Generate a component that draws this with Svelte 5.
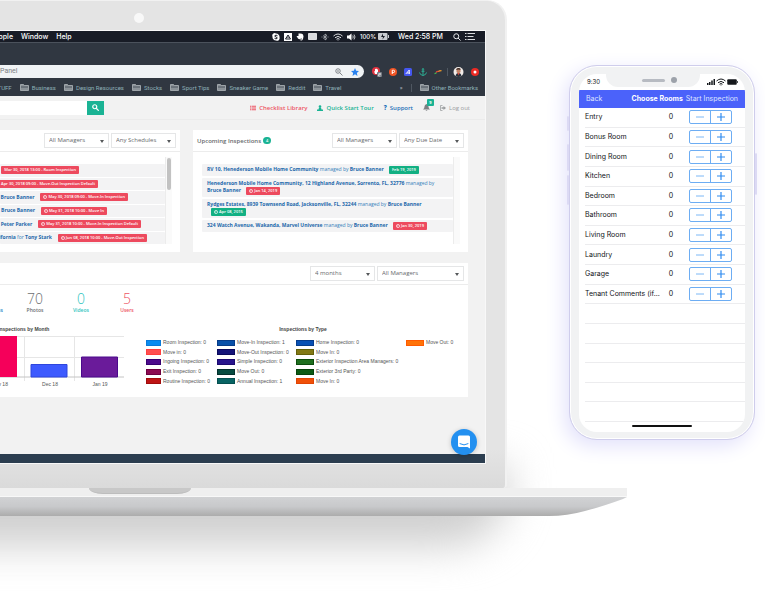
<script>
  const bookmarks = ['Business', 'Design Resources', 'Stocks', 'Sport Tips', 'Sneaker Game', 'Reddit', 'Travel'];

  // "end" is the right edge of each entry inside the scrolled list
  const completed = [
    { end: 79, place: '', name: '', tag: 'Mar 30, 2018 13:00 - Room Inspection', clock: false },
    { end: 98, place: '', name: '', tag: 'Apr 30, 2018 09:00 - Move-Out Inspection Default', clock: true },
    { end: 128, place: '', name: 'Bruce Banner', tag: 'May 30, 2018 09:00 - Move-In Inspection', clock: true },
    { end: 107, place: '', name: 'Bruce Banner', tag: 'May 31, 2018 10:00 - Move In', clock: true },
    { end: 141, place: '', name: 'Peter Parker', tag: 'May 31, 2018 10:00 - Move-In Inspection Default', clock: true },
    { end: 147, place: 'California', name: 'Tony Stark', tag: 'Jun 08, 2018 10:00 - Move-Out Inspection', clock: true }
  ];

  const upcoming = [
    { place: 'RV 10, Henederson Mobile Home Community', tag: 'Feb 19, 2019', tone: 'green', clock: false },
    { place: 'Henederson Mobile Home Community, 12 Highland Avenue, Sorrento, FL, 32776', tag: 'Jan 14, 2019', tone: 'red', clock: true },
    { place: 'Rydges Estates, 8939 Townsend Road, Jacksonville, FL, 32244', tag: 'Apr 08, 2015', tone: 'green', clock: true },
    { place: '324 Watch Avenue, Wakanda, Marvel Universe', tag: 'Jan 30, 2019', tone: 'red', clock: true }
  ];

  const stats = [
    { n: 12, label: 'Inspections', color: '#1c84c6' },
    { n: 70, label: 'Photos', color: '#6b6e70' },
    { n: 0, label: 'Videos', color: '#2fc4c0' },
    { n: 5, label: 'Users', color: '#ed5565' }
  ];

  const legend = [
    [
      ['Room Inspection: 0', '#0a8cf0', '#0a7ad8'],
      ['Move in: 0', '#ff4f4f', '#ff3f3f'],
      ['Ingoing Inspection: 0', '#4b0a8c', '#360070'],
      ['Exit Inspection: 0', '#8c0a50', '#6e0040'],
      ['Routine Inspection: 0', '#be1414', '#a00c0c']
    ],
    [
      ['Move-In Inspection: 1', '#0850a8', '#063c88'],
      ['Move-Out Inspection: 0', '#141478', '#0a0a5c'],
      ['Simple Inspection: 0', '#28148c', '#1c0a70'],
      ['Move Out: 0', '#064b40', '#04302c'],
      ['Annual Inspection: 1', '#086464', '#045050']
    ],
    [
      ['Home Inspection: 0', '#0850b4', '#063c8c'],
      ['Move In: 0', '#827814', '#64600a'],
      ['Exterior Inspection Area Managers: 0', '#1e6e1e', '#0c4c0c'],
      ['Exterior 3rd Party: 0', '#0c5a14', '#06440c'],
      ['Move In: 0', '#f05008', '#e04404']
    ],
    [['Move Out: 0', '#ff7308', '#ff5a00']]
  ];

  let rooms = $state([
    'Entry', 'Bonus Room', 'Dining Room', 'Kitchen', 'Bedroom', 'Bathroom',
    'Living Room', 'Laundry', 'Garage', 'Tenant Comments (if...'
  ].map((name) => ({ name, count: 0 })));
  const blanks = [1, 2, 3, 4, 5, 6];
</script>

{#snippet folder()}
  <svg class="folder" viewBox="0 0 18 14" aria-hidden="true">
    <path d="M1 13V1h6l1.500 2H17v10z" fill="#8b9298" stroke="#b4babd" stroke-width="1.500" />
    <path d="M2 6h14" stroke="#3a424c" stroke-width="1.500" />
  </svg>
{/snippet}

{#snippet clockIcon()}
  <svg class="clock" viewBox="0 0 10 10" aria-hidden="true">
    <circle cx="5" cy="5" r="4" fill="none" stroke="#fff" stroke-width="1.600" />
    <path d="M5 2.500V5.500H3" fill="none" stroke="#fff" stroke-width="1.200" />
  </svg>
{/snippet}

{#snippet wifi(color)}
  <svg width="10" height="8" viewBox="0 0 20 16" fill="none" stroke={color} stroke-width="2" aria-hidden="true">
    <path d="M1 6Q10-2 19 6M4 9.500Q10 4 16 9.500M7 12.500Q10 9.500 13 12.500" />
    <circle cx="10" cy="14" r="1" fill={color} stroke="none" />
  </svg>
{/snippet}

{#snippet picker(name, label, wide)}
  <span class="picker" class:wide>
    <select aria-label={name}><option>{label}</option></select>
  </span>
{/snippet}

<main class="scene">
  <section class="laptop">
    <div class="floor-shadow"></div>
    <div class="lid">
      <span class="camera"></span>
      <div class="screen">
        <div class="menubar">
          <nav class="menus"><span>People</span><span>Window</span><span>Help</span></nav>
          <div class="tray">
            <svg width="8" height="8" viewBox="0 0 16 16"><path d="M5 0a5 5 0 0 1 3 1a7 7 0 0 1 7 8a5 5 0 0 1-7 6a7 7 0 0 1-7-8A5 5 0 0 1 5 0z" fill="#fff" /><path d="M11 5.500Q8 3.500 6 5t2 3t2 3t-5-.5" fill="none" stroke="#181c26" stroke-width="2" /></svg>
            <svg width="8" height="8" viewBox="0 0 16 16"><path d="M0 0h16v16H0z" fill="#fff" /><path d="M8 4l5 8H3zM8 7v3" fill="none" stroke="#181c26" stroke-width="2" /></svg>
            <svg width="8" height="8" viewBox="0 0 16 16"><path d="M5 1q7-1 9 2t0 9q-2 4-5 3v-3q-3 1-5-1L1 6h4z" fill="#fff" /><path d="M9 12h3" stroke="#181c26" stroke-width="1.500" /></svg>
            <svg width="9" height="7" viewBox="0 0 18 14"><path d="M1 1h16v12H1z" fill="#d9dbde" stroke="#fff" stroke-width="1.500" /></svg>
            <svg width="8" height="8" viewBox="0 0 16 16" fill="none" stroke="#b9bcc2" stroke-width="1.500"><path d="M4 5l8 6-4 3V2l4 3-8 6M1 8h2M13 8h2" /></svg>
            {@render wifi('#d9dbde')}
            <svg width="9" height="8" viewBox="0 0 18 16"><path d="M0 5h4l5-4v14l-5-4H0z" fill="#fff" /><path d="M11.500 5q2 3 0 6M14 3q4 5 0 10" fill="none" stroke="#fff" stroke-width="1.500" /></svg>
            <span class="charge">100%
              <svg width="11" height="7" viewBox="0 0 22 14"><rect width="19" height="14" rx="2" fill="#c8cbd0" /><path d="M20 4h2v6h-2z" fill="#c8cbd0" /><path d="M10 1L6 8h4l-1 5 5-7h-4z" fill="#181c26" /></svg>
            </span>
            <span class="time">Wed 2:58 PM</span>
            <svg width="8" height="8" viewBox="0 0 16 16" fill="none" stroke="#e4e6e9" stroke-width="2"><circle cx="6.500" cy="6.500" r="5" /><path d="M10 10l5 5" /></svg>
            <svg width="10" height="7" viewBox="0 0 20 14" stroke="#d9dbde" stroke-width="2"><path d="M0 1h3M5 1h15M0 7h3M5 7h12M0 13h3M5 13h15" /></svg>
          </div>
        </div>
        <div class="tabs"></div>
        <div class="address">
          <div class="omnibox">
            <input aria-label="Address" value="Panel" />
            <svg width="8" height="8" viewBox="0 0 16 16" fill="none" stroke="#666b70" stroke-width="1.600"><circle cx="6" cy="6" r="4.500" /><path d="M9.500 9.500L15 15M4 6h4" /></svg>
            <svg width="8" height="8" viewBox="0 0 16 16"><path d="M8 0l2.300 5.500 5.700.5-4.300 3.800L13 16l-5-3.300L3 16l1.300-6.200L0 6l5.700-.5z" fill="#2a83f0" /></svg>
          </div>
          <div class="extensions">
            <svg width="10" height="10" viewBox="0 0 20 20"><circle cx="8" cy="8" r="8" fill="#e2323f" /><path d="M6 14L4 8l2 1V4h1.500V3H9v1h1.500v1H12v6l-2 3z" fill="#fff" /><rect x="10" y="10" width="10" height="10" rx="2" fill="#747a82" /><path d="M13 13h4v2h-4v3h4" fill="none" stroke="#fff" stroke-width="1.200" /></svg>
            <svg width="8" height="8" viewBox="0 0 16 16"><circle cx="8" cy="8" r="8" fill="#ef5424" /><path d="M6.500 12V4.500H9a2.200 2.200 0 0 1 0 4.500H6.500" fill="none" stroke="#fff" stroke-width="2" /></svg>
            <svg width="8" height="8" viewBox="0 0 16 16"><rect width="16" height="16" rx="3" fill="#4557ef" /><path d="M3.500 12l7-8v8M6 10h6" fill="none" stroke="#fff" stroke-width="1.800" /></svg>
            <svg width="8" height="8" viewBox="0 0 16 16" fill="none" stroke="#2db79a" stroke-width="1.800"><circle cx="8" cy="2.500" r="1.500" /><path d="M8 4v11M5 6.500h6M1 9q1 5 7 6 6-1 7-6" /></svg>
            <svg width="8" height="8" viewBox="0 0 16 16" fill="none" stroke-width="2.500"><path d="M1 11q3 0 4-2" stroke="#3cba54" /><path d="M4 9q2-3 6-2" stroke="#e0443a" /><path d="M9 7q1-2 6-2" stroke="#f09a28" /></svg>
            <i class="rule"></i>
            <svg width="11" height="10" viewBox="0 0 20 20"><circle cx="10" cy="10" r="10" fill="#f2ece8" /><path d="M4 18q1-6 6-6t6 6q-6 4-12 0z" fill="#27303b" /><path d="M6 6q0-4 4-4t4 4v4q-4 5-8 0z" fill="#c18468" /><path d="M5 6q1-5 6-4 4 0 3 4-4-2-9 0z" fill="#40302a" /><path d="M8 12l2 5 2-5z" fill="#df493d" /></svg>
            <svg width="8" height="8" viewBox="0 0 16 16"><circle cx="8" cy="8" r="8" fill="#ec2a24" /><circle cx="8" cy="8" r="3" fill="#fff" /></svg>
          </div>
        </div>
        <div class="bookmarks">
          <span class="cut">STUFF</span>
          {#each bookmarks as b}<a href="#bookmark">{@render folder()}{b}</a>{/each}
          <span class="more">»</span><i class="rule"></i>
          <a href="#bookmark">{@render folder()}Other Bookmarks</a>
        </div>

        <div class="app">
          <header class="topnav">
            <form class="search">
              <input aria-label="Search" />
              <button type="button" aria-label="Search">
                <svg width="7" height="7" viewBox="0 0 14 14" fill="none" stroke="#fff" stroke-width="2.400"><circle cx="5.500" cy="5.500" r="4" /><path d="M8.500 8.500l5 5" /></svg>
              </button>
            </form>
            <nav class="links">
              <a class="red" href="#library"><svg width="6" height="6" viewBox="0 0 12 10" stroke="#ed5565" stroke-width="2.400"><path d="M0 1.500h3M4 1.500h8M0 5h3M4 5h8M0 8.500h3M4 8.500h8" /></svg>Checklist Library</a>
              <a class="green" href="#tour"><svg width="6" height="6" viewBox="0 0 12 12" fill="#1ab394"><circle cx="6" cy="3" r="2.600" /><path d="M4 5h4l1 4h3v3H0V9h3z" /></svg>Quick Start Tour</a>
              <a class="blue" href="#support"><b>?</b>Support</a>
              <a class="bell" href="#alerts" aria-label="Alerts"><svg width="7" height="7" viewBox="0 0 14 14" fill="#7d8083"><path d="M7 0q4 1 4 5 0 4 3 6H0q3-2 3-6 0-4 4-5zM5 12h4q-2 3-4 0z" /></svg><span class="count">9</span></a>
              <a class="gray" href="#logout"><svg width="6" height="6" viewBox="0 0 12 12"><path d="M5 1H1v10h4" fill="none" stroke="#999c9e" stroke-width="1.500" /><path d="M3 4.500h4V2l5 4-5 4V7.500H3z" fill="#999c9e" /></svg>Log out</a>
            </nav>
          </header>

          <div class="panels">
            <section class="panel done">
              <div class="head">
                {@render picker('Manager', 'All Managers')}
                {@render picker('Schedule', 'Any Schedules')}
              </div>
              <div class="body">
                <ul class="list past">
                  {#each completed as c}
                    <li>
                      <span class="entry" style="width: {c.end}px">
                        {#if c.name}<span>{#if c.place}<b>{c.place}</b>{' for '}{/if}<b>{c.name}</b></span>{/if}
                        <span class="tag">{#if c.clock}{@render clockIcon()}{/if}{c.tag}</span>
                      </span>
                    </li>
                  {/each}
                </ul>
                <div class="track"><i></i></div>
              </div>
            </section>
            <section class="panel next">
              <div class="head">
                <h2>Upcoming Inspections <span class="pill">4</span></h2>
                {@render picker('Manager', 'All Managers')}
                {@render picker('Due date', 'Any Due Date')}
              </div>
              <div class="body">
                <ul class="list soon">
                  {#each upcoming as u}
                    <li><b>{u.place}</b> managed by <b>Bruce Banner</b> <span class="tag {u.tone}">{#if u.clock}{@render clockIcon()}{/if}{u.tag}</span></li>
                  {/each}
                </ul>
                <div class="track"></div>
              </div>
            </section>
          </div>

          <section class="panel report">
            <div class="head">
              {@render picker('Period', '4 months')}
              {@render picker('Manager', 'All Managers', true)}
            </div>
            <div class="stats">
              {#each stats as s}
                <div style="color: {s.color}"><strong>{s.n}</strong><span>{s.label}</span></div>
              {/each}
            </div>
            <div class="charts">
              <div class="month">
                <h3>Inspections by Month</h3>
                <svg class="bars" width="125" height="45" viewBox="0 0 125 45" aria-hidden="true">
                  <path d="M0 .5h124M0 21.500h124M24.500 0v45M74.500 0v45" stroke="#e6e6e6" />
                  <path d="M0 41h124" stroke="#c4c4c4" />
                  <path d="M0 0h17v41H0z" fill="#f5005a" />
                  <path d="M31 28.500h36V41H31z" fill="#3d5afe" stroke="#2f46dc" />
                  <path d="M81.500 21h36v20h-36z" fill="#6a1b9a" stroke="#4b0a8c" />
                </svg>
                <div class="axis"><span>Nov 18</span><span>Dec 18</span><span>Jan 19</span></div>
              </div>
              <div class="type">
                <h3>Inspections by Type</h3>
                <div class="legend">
                  {#each legend as col}
                    <ul>
                      {#each col as [text, fill, edge]}
                        <li><i style="background: {fill}; border-color: {edge}"></i>{text}</li>
                      {/each}
                    </ul>
                  {/each}
                </div>
              </div>
            </div>
          </section>
        </div>
        <footer></footer>
        <button class="chat" aria-label="Open chat">
          <svg width="14" height="14" viewBox="0 0 28 28"><path d="M5 1h18q3 0 3 3v23l-5-3H5q-3 0-3-3V4q0-3 3-3z" fill="#fff" /><path d="M6 17.500q8 5 16 0" fill="none" stroke="#2390f0" stroke-width="2" stroke-linecap="round" /></svg>
        </button>
      </div>
    </div>
    <div class="deck"><span class="notch"></span></div>
    <div class="under">
      <i></i>
      <svg width="96" height="19" viewBox="0 0 96 19" aria-hidden="true">
        <defs><linearGradient id="metal" x2="0" y2="1"><stop offset="0" stop-color="#d1d2d4" /><stop offset=".5" stop-color="#c8c9cb" /><stop offset="1" stop-color="#acacac" /></linearGradient></defs>
        <path d="M0 0H96L92 2Q70 10 54 14 36 19 18 19H0z" fill="url(#metal)" />
      </svg>
    </div>
  </section>

  <section class="phone">
    <i class="key k1"></i><i class="key k2"></i><i class="key k3"></i><i class="key k4"></i>
    <div class="glass">
      <div class="status">
        <span>9:30</span>
        <span class="ear"><i></i><b></b></span>
        <span class="signal">
          <svg width="8" height="6" viewBox="0 0 16 12" fill="#15181c"><path d="M0 8h3v4H0zM4 6h3v6H4zM8.500 3h3v9h-3zM13 0h3v12h-3z" /></svg>
          {@render wifi('#15181c')}
          <svg width="11" height="6" viewBox="0 0 22 12"><rect x=".5" y=".5" width="19" height="11" rx="2" fill="#15181c" /><path d="M20.500 4h1.500v4h-1.500z" fill="#15181c" /></svg>
        </span>
      </div>
      <header class="bar">
        <button>Back</button><h1>Choose Rooms</h1><button>Start Inspection</button>
      </header>
      <ul class="rooms">
        {#each rooms as r}
          <li>
            <span class="name">{r.name}</span><span class="num">{r.count}</span>
            <span class="stepper">
              <button aria-label="Fewer {r.name}" onclick={() => (r.count = Math.max(0, r.count - 1))}><svg width="8" height="8" viewBox="0 0 8 8"><path d="M0 4h8" stroke="#7db8f6" /></svg></button>
              <button aria-label="More {r.name}" onclick={() => (r.count += 1)}><svg width="8" height="8" viewBox="0 0 8 8"><path d="M0 4h8M4 0v8" stroke="#2f8bf0" stroke-width="1.200" /></svg></button>
            </span>
          </li>
        {/each}
        {#each blanks as _}<li></li>{/each}
      </ul>
      <div class="home"></div>
    </div>
  </section>
</main>

<style>
  :global(body) { margin: 0; background: #fff; }
  .scene, .scene * { box-sizing: border-box; }
  .scene { display: flex; align-items: flex-start; min-height: 100vh; overflow: hidden; font: 5px/7px "Open Sans", "Noto Sans", sans-serif; color: #676a6c; }
  ul, h1, h2, h3 { margin: 0; padding: 0; list-style: none; }
  a { color: inherit; text-decoration: none; }
  svg { display: block; flex: none; }
  button, input, select { font: inherit; color: inherit; margin: 0; padding: 0; border: 0; background: none; border-radius: 0; }

  .laptop { position: relative; flex: 1; min-width: 0; z-index: 0; }
  .floor-shadow { position: absolute; z-index: -1; left: -80px; right: 118px; bottom: -30px; height: 80px; background: #cfcfcf; border-radius: 0 0 60px 0; filter: blur(20px); }
  .lid { position: relative; height: 488px; margin-right: 120px; padding: 29px 19px 24px 0; background: linear-gradient(#e4e4e4 92%, #dadada); border: solid #f1f1f1; border-width: 1px 2px 0 0; border-radius: 0 20px 4px 0; }
  .camera { position: absolute; left: 134px; top: 12px; width: 10px; height: 10px; border-radius: 50%; background: #f8f8f8; }
  .screen { position: relative; height: 100%; display: flex; flex-direction: column; overflow: hidden; border: solid #f8f8f8; border-width: 1px 1px 1px 0; }

  .menubar { display: flex; justify-content: space-between; align-items: center; height: 11px; background: #181c26; color: #fff; font: 500 7px/10px Inter, sans-serif; padding-right: 10px; white-space: nowrap; }
  .menus { display: flex; gap: 8px; margin-left: -10px; }
  .tray { display: flex; align-items: center; gap: 4px; }
  .charge { display: flex; align-items: center; gap: 2px; font-size: 6px; }
  .time { margin: 0 6px 0 5px; }
  .tabs { height: 22px; background: #303741; border-top: 1px solid #4b525c; }
  .address { display: flex; align-items: center; background: #303741; height: 15px; padding-right: 6px; gap: 8px; }
  .omnibox { display: flex; flex: 1; min-width: 0; align-items: center; gap: 8px; height: 13px; padding-right: 5px; background: #f0f3f5; border-radius: 0 7px 7px 0; color: #7c8084; font: 7px/13px Roboto, sans-serif; }
  .omnibox input { flex: 1; min-width: 0; height: 13px; }
  .extensions { display: flex; align-items: center; gap: 7px; }
  .rule { width: 1px; height: 8px; background: #4f5761; }
  .extensions .rule { margin: 0 -2px; }
  .bookmarks { display: flex; align-items: center; gap: 8px; height: 17px; padding-right: 7px; background: #303741; color: #8fb0b8; font: 6px/8px Roboto, sans-serif; white-space: nowrap; }
  .bookmarks a { display: flex; align-items: center; gap: 3px; }
  .cut { margin-left: -6px; }
  .more { margin-left: auto; color: #c5cdd0; }
  .folder { width: 9px; height: 7px; }

  .app { flex: 1; background: #f2f2f2; min-height: 0; }
  .topnav { display: flex; justify-content: space-between; align-items: center; height: 24px; border-bottom: 1px solid #ebebeb; padding-right: 15px; font-size: 6px; line-height: 8px; }
  .search { display: flex; height: 14px; width: 104px; }
  .search input { flex: 1; min-width: 0; background: #fff; }
  .search button { width: 17px; display: grid; place-items: center; background: #1ab394; }
  .links { display: flex; align-items: center; gap: 10px; white-space: nowrap; }
  .links a { display: flex; align-items: center; gap: 3px; font-weight: 600; }
  .links .red { color: #ed5565; }
  .links .green { color: #1ab394; }
  .links .blue { color: #1c6fb8; }
  .links .gray { color: #999c9e; font-weight: 400; }
  .bell { position: relative; }
  .count { position: absolute; left: 4px; top: -5px; width: 7px; height: 7px; background: #1ab394; color: #fff; font: bold 4px/7px "Open Sans", sans-serif; text-align: center; border-radius: 1px; }

  .panels { display: flex; gap: 13px; margin: 10px 17px 11px 0; }
  .panel { background: #fff; }
  .done { flex: 180; min-width: 0; }
  .next { flex: 275; min-width: 0; }
  .head { display: flex; align-items: center; justify-content: flex-end; gap: 2px; height: 22px; padding: 0 4px; border-bottom: 1px solid #ececec; }
  h2 { flex: 1; display: flex; align-items: center; gap: 2px; font-size: 6px; line-height: 8px; font-weight: 600; white-space: nowrap; }
  .pill { width: 8px; height: 7px; border-radius: 4px; background: #1ab394; color: #fff; font-size: 4px; line-height: 7px; text-align: center; }
  .picker { position: relative; width: 65px; height: 15px; border: 1px solid #e5e6e7; background: #fff; }
  .picker::after { content: ""; position: absolute; right: 4px; top: 6px; border: solid transparent; border-width: 3px 2px 0; border-top-color: #55585a; pointer-events: none; }
  .picker select { appearance: none; display: block; width: 100%; height: 13px; padding: 0 4px; font-size: 6px; line-height: 13px; }
  .wide { width: 87px; }
  .body { display: flex; height: 100px; padding: 5px 8px 8px 0; }
  .next .body { padding-left: 9px; }
  .list { flex: 1; min-width: 0; color: #3580bb; }
  .list b { color: #1c68ab; font-weight: 700; }
  .list li { background: #f3f3f4; border-radius: 1px; }
  .past { display: grid; grid-auto-rows: 1fr; row-gap: 1px; padding-top: 7px; height: 87px; overflow: hidden; }
  .past li { display: flex; align-items: center; }
  .entry { display: flex; flex: none; align-items: center; justify-content: flex-end; gap: 6px; white-space: nowrap; }
  .soon { display: flex; flex-direction: column; gap: 2px; padding-top: 7px; }
  .soon li { padding: 2px 5px 3px; }
  .tag { display: inline-flex; align-items: center; gap: 1px; height: 8px; padding: 0 3px; border-radius: 1px; background: #ed4a5e; color: #fff; font-size: 4px; line-height: 8px; font-weight: 600; white-space: nowrap; }
  .soon .tag { margin: -1px 0 -1px 4px; vertical-align: middle; }
  .tag.green { background: #12b083; }
  .clock { width: 4px; height: 4px; }
  .track { width: 7px; background: #fafafa; border-left: 1px solid #ececec; padding: 1px; }
  .track i { display: block; width: 4px; height: 32px; border-radius: 2px; background: #c2c2c2; }

  .report { margin-right: 17px; height: 134px; }
  .stats { display: flex; margin-left: -34px; padding-top: 6px; }
  .stats div { width: 46px; display: flex; flex-direction: column; align-items: center; }
  .stats strong { font-weight: 300; font-size: 14px; line-height: 16px; }
  .stats span { font-weight: 600; line-height: 7px; }
  .charts { display: flex; margin-top: 12px; font-family: "Liberation Sans", Arial, sans-serif; color: #555; }
  h3 { font-size: 5px; line-height: 6px; font-weight: 700; color: #444; white-space: nowrap; }
  .month { width: 138px; }
  .month h3 { margin-left: -2px; }
  .bars { margin-top: 4px; }
  .axis { display: flex; margin-left: -25px; }
  .axis span { width: 50px; text-align: center; }
  .type { flex: 1; padding: 0 0 0 8px; }
  .type h3 { text-align: center; padding-right: 8px; }
  .legend { display: grid; grid-template-columns: 71px 79px 110px auto; margin-top: 6px; white-space: nowrap; }
  .legend ul { display: grid; grid-template-rows: repeat(5, 1fr); height: 48px; }
  .legend li { display: flex; align-items: center; gap: 2px; }
  .legend i { width: 18px; height: 6px; border: 1px solid; }
  .legend ul:first-child i { width: 15px; }

  footer { height: 9px; background: #2c3e50; }
  .chat { position: absolute; right: 8px; bottom: 8px; width: 26px; height: 26px; display: grid; place-items: center; border-radius: 50%; background: #2390f0; box-shadow: 0 1px 5px #0003; }

  .deck { position: relative; height: 9px; background: #efefef; border-bottom: 1px solid #f8f8f8; }
  .notch { position: absolute; left: 89px; top: 0; width: 102px; height: 6px; background: #c8c8c8; border-radius: 0 0 14px 14px / 0 0 6px 6px; border-bottom: 1px solid #bdbdbd; }
  .under { display: flex; height: 19px; }
  .under i { flex: 1; background: linear-gradient(#d1d2d4, #c8c9cb 50%, #acacac); }

  .phone { position: relative; z-index: 1; flex: none; width: 186px; margin: 65px 10px 0 -58px; padding: 8px 9px 7px; background: #f1f2f3; border: 1px solid #cfcdec; border-radius: 28px; box-shadow: inset 0 0 0 1px #fff, -4px 6px 20px #e2e1fb; font: 7px/10px Inter, sans-serif; color: #111317; }
  .glass { background: #fff; border-radius: 18px; overflow: hidden; }
  .status { display: flex; align-items: flex-start; justify-content: space-between; height: 16px; padding: 0 7px 0 8px; }
  .status > span:first-child { padding-top: 3px; font-size: 6px; }
  .ear { display: flex; justify-content: center; gap: 6px; width: 94px; height: 13px; background: #f1f2f3; border-radius: 0 0 12px 12px; padding: 3px 0 0 13px; }
  .ear i { width: 23px; height: 3px; margin-top: 2px; border-radius: 2px; background: #b7bbc2; }
  .ear b { width: 6px; height: 6px; border-radius: 50%; background: #9da2aa; }
  .signal { display: flex; align-items: center; gap: 1px; height: 15px; }
  .bar { display: flex; align-items: center; height: 18px; padding: 0 7px; background: #4b62fa; color: #dfe4ff; white-space: nowrap; }
  .bar h1 { margin-left: auto; font-size: 7px; line-height: 10px; font-weight: 700; color: #fff; padding-right: 3px; }
  .rooms { display: grid; grid-template-rows: repeat(16, 1fr); height: 314px; margin-left: 6px; }
  .rooms li { display: flex; align-items: center; border-bottom: 1px solid #ececee; padding-right: 13px; }
  .name { width: 78px; white-space: nowrap; }
  .num { width: 16px; text-align: center; }
  .stepper { display: flex; margin-left: auto; width: 43px; height: 14px; border: 1px solid #6dadf3; border-radius: 2px; }
  .stepper button { flex: 1; display: grid; place-items: center; }
  .stepper button + button { border-left: 1px solid #6dadf3; }
  .home { width: 60px; height: 2px; margin: 3px auto 5px; border-radius: 1px; background: #111; }
  .key { position: absolute; left: -3px; width: 2px; border: 1px solid #dcdaf4; border-radius: 1px; }
  .k1 { top: 50px; height: 15px; }
  .k2 { top: 78px; height: 27px; }
  .k3 { top: 109px; height: 30px; }
  .k4 { left: auto; right: -3px; top: 87px; height: 42px; }
</style>
